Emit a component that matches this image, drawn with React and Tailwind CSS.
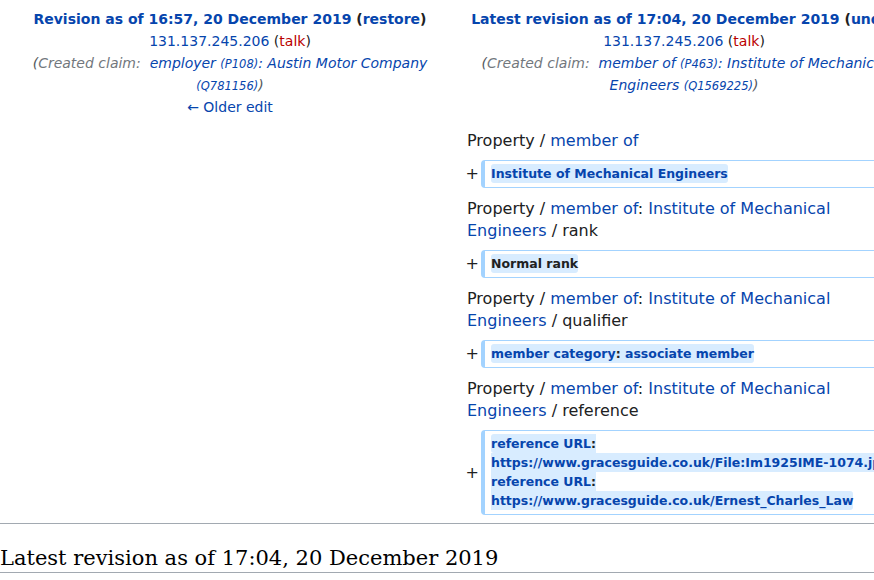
const link = 'text-[#0645ad]';

function Plus() {
  return (
    <div className="w-[24px] shrink-0 pr-[2px] text-right text-[16px] leading-none text-[#202122]">
      +
    </div>
  );
}

function Box({children}) {
  return (
    <div className="mt-[8px] flex items-center">
      <Plus />
      <div className="flex-1 rounded-[4px] border border-l-4 border-[#a3d3ff] pl-[6px] pr-[6px] pt-[3px] pb-[4px] text-[12.5px] font-bold leading-[19px] text-[#202122]">
        <span className="rounded-[3px] bg-[#d8ecff] py-[2px]">{children}</span>
      </div>
    </div>
  );
}

function PropLine({children, first}) {
  return (
    <div
      className={`${first ? '' : 'mt-[10px]'} pl-[10px] pr-[10px] text-[16px] leading-[22px] text-[#202122]`}
    >
      {children}
    </div>
  );
}

function MemberOf({tail}) {
  return (
    <>
      Property / <span className={link}>member of</span>: <span className={link}>Institute of Mechanical Engineers</span> / {tail}
    </>
  );
}

function Id({children}) {
  return <span className="text-[11.5px] leading-none">{children}</span>;
}

export default function App() {
  return (
    <div className="w-[874px] overflow-hidden bg-white font-['DejaVu_Sans',sans-serif] text-[#202122]">
      <div className="ml-[3px] grid w-[908px] grid-cols-[454px_454px]">
        {/* header, older revision */}
        <div className="px-[4px] pt-[8px] text-center text-[14px] leading-[22px]">
          <div className="whitespace-nowrap font-bold">
            <span className={link}>Revision as of 16:57, 20 December 2019</span> (<span className={link}>restore</span>)
          </div>
          <div>
            <span className={link}>131.137.245.206</span> (<span className="text-[#ba0000]">talk</span>)
          </div>
          <div className="italic leading-[22px] text-[#54595d]">
            (<span className="text-[#72777d]">Created claim:</span>{'\u00a0 '}
            <span className={link}>
              employer <Id>(P108)</Id>: Austin Motor Company <Id>(Q781156)</Id>
            </span>
            )
          </div>
          <div>
            <span className={link}>← Older edit</span>
          </div>
        </div>

        {/* header, latest revision */}
        <div className="px-[4px] pt-[8px] text-center text-[14px] leading-[22px]">
          <div className="whitespace-nowrap font-bold">
            <span className={link}>Latest revision as of 17:04, 20 December 2019</span> (<span className={link}>undo</span>)
          </div>
          <div>
            <span className={link}>131.137.245.206</span> (<span className="text-[#ba0000]">talk</span>)
          </div>
          <div className="italic leading-[22px] text-[#54595d]">
            (<span className="text-[#72777d]">Created claim:</span>{'\u00a0 '}
            <span className={link}>
              member of <Id>(P463)</Id>: Institute of Mechanical Engineers <Id>(Q1569225)</Id>
            </span>
            )
          </div>
        </div>

        {/* diff body */}
        <div className="col-start-2 pt-[12px]">
          <PropLine first>
            Property / <span className={link}>member of</span>
          </PropLine>
          <Box>
            <span className={link}>Institute of Mechanical Engineers</span>
          </Box>

          <PropLine>
            <MemberOf tail="rank" />
          </PropLine>
          <Box>Normal rank</Box>

          <PropLine>
            <MemberOf tail="qualifier" />
          </PropLine>
          <Box>
            <span className={link}>member category</span>: <span className={link}>associate member</span>
          </Box>

          <PropLine>
            <MemberOf tail="reference" />
          </PropLine>
          <Box>
            <span className={link}>reference URL</span>:{' '}
            <span className={`${link} whitespace-nowrap`}>https://www.gracesguide.co.uk/File:Im1925IME-1074.jpg</span>
            <br />
            <span className={link}>reference URL</span>:{' '}
            <span className={`${link} whitespace-nowrap`}>https://www.gracesguide.co.uk/Ernest_Charles_Law</span>
          </Box>
        </div>
      </div>

      <div className="mt-[8px] border-t border-[#a2a9b1]" />
      <h2 className="mt-[20px] border-b border-[#a2a9b1] font-['DejaVu_Serif',serif] text-[21px] leading-[28px] text-black">
        Latest revision as of 17:04, 20 December 2019
      </h2>
      <div className="h-[20px]" />
    </div>
  );
}
